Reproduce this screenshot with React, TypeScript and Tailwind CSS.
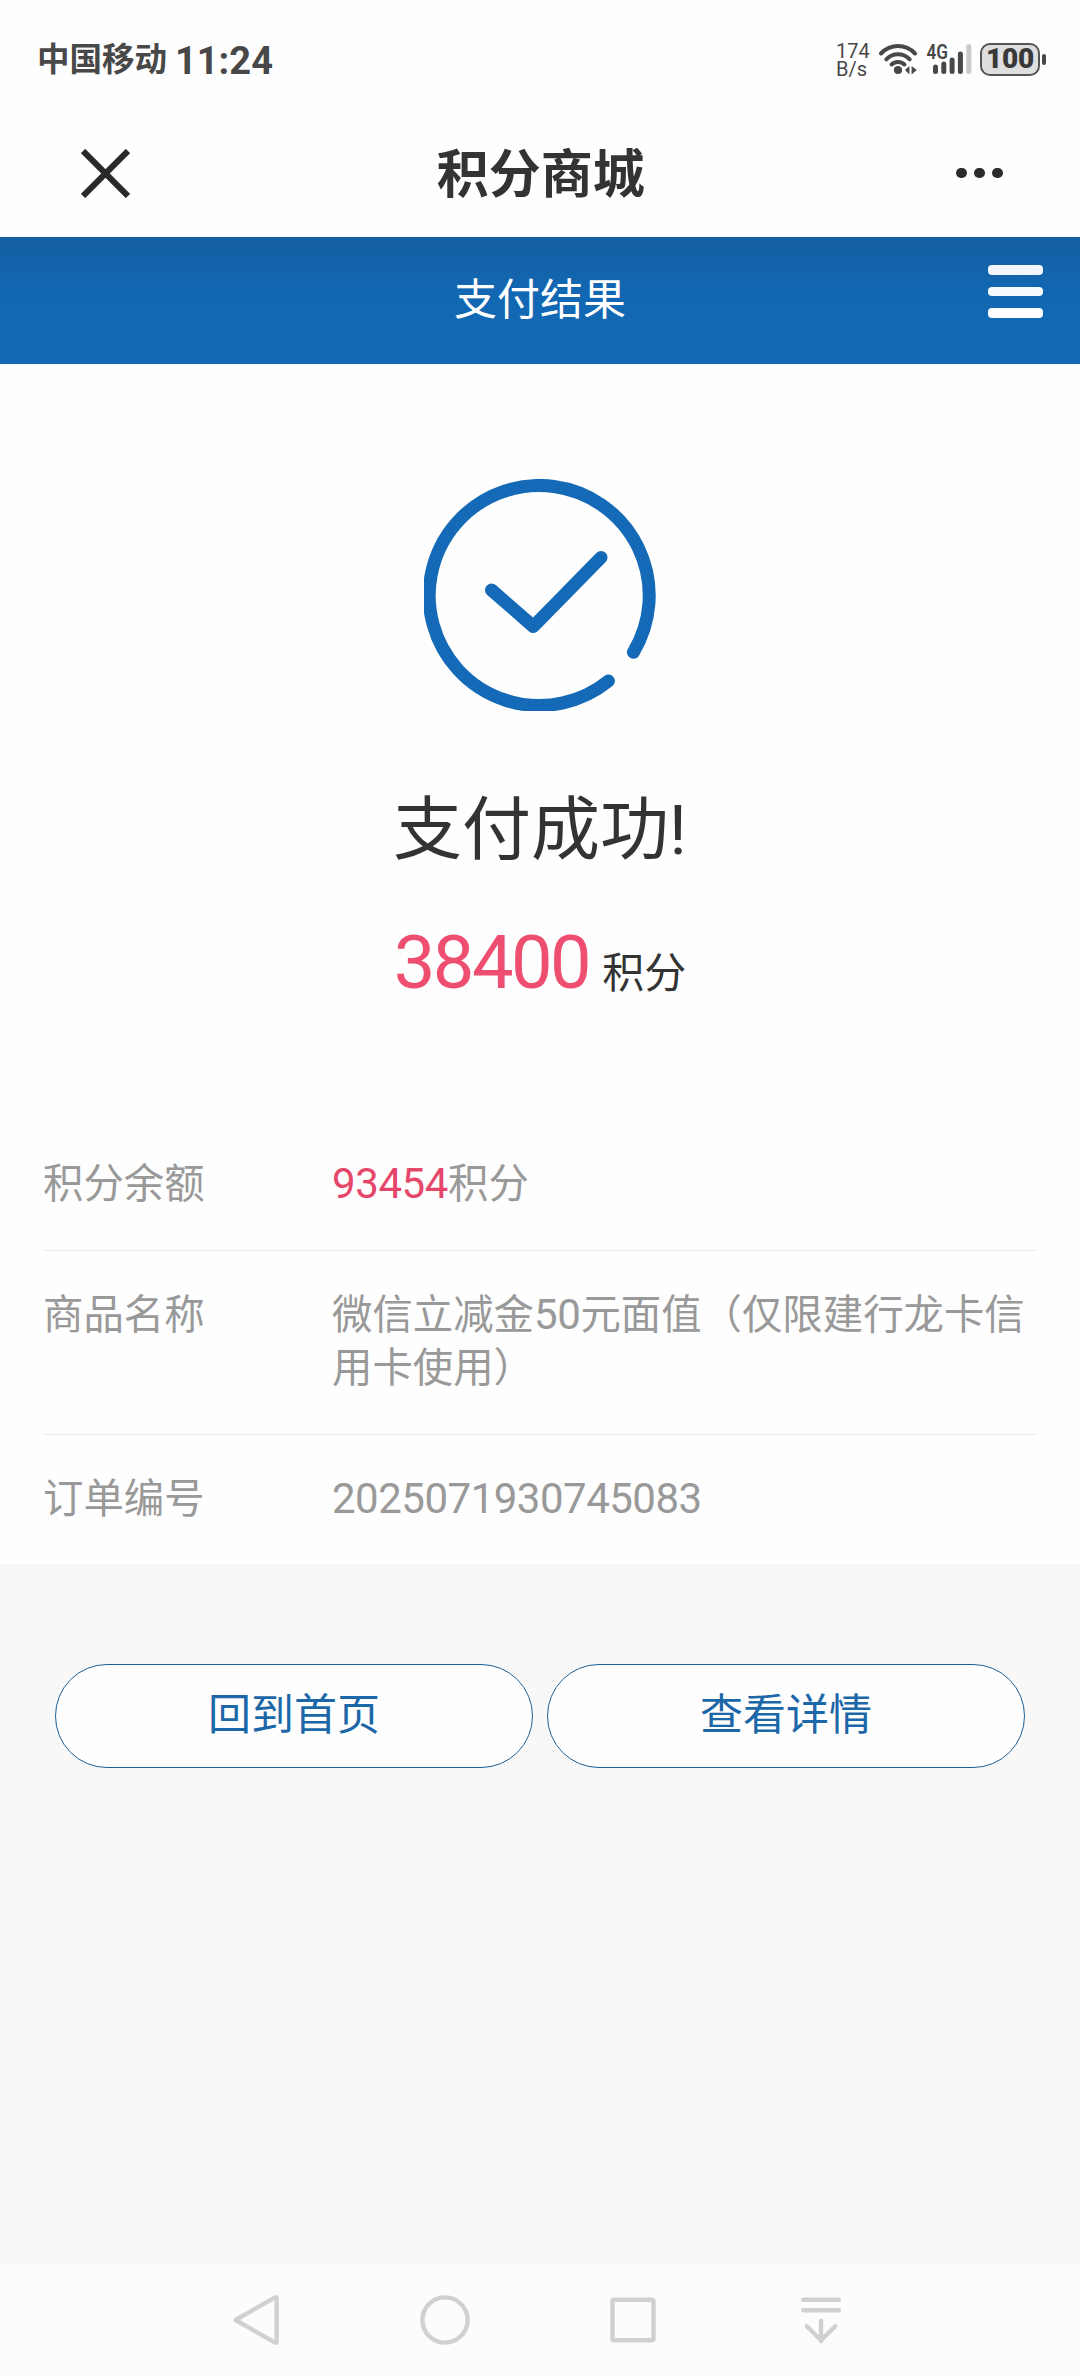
import type { ReactNode } from 'react';

const rows: { label: string; value: ReactNode }[] = [
  {
    label: '积分余额',
    value: (
      <>
        <span className="text-[42px] leading-none tracking-[-0.4px] text-[#e5476b]">93454</span>积分
      </>
    ),
  },
  {
    label: '商品名称',
    value: (
      <>
        微信立减金<span className="text-[42px] leading-none tracking-[-0.4px]">50</span>元面值（仅限建行龙卡信用卡使用）
      </>
    ),
  },
  {
    label: '订单编号',
    value: <span className="text-[42px] leading-none tracking-[-0.5px]">2025071930745083</span>,
  },
];

const actions = ['回到首页', '查看详情'];

function WifiIcon() {
  return (
    <svg width="40" height="34" viewBox="0 0 40 34" fill="none" stroke="#484848" strokeWidth="4" strokeLinecap="round">
      <path d="M3 11.5C12.5 1.6 27.5 1.6 37 11.5" />
      <path d="M8.3 17.3C14.8 10.6 25.2 10.6 31.7 17.3" />
      <path d="M13.5 22.5C17.2 19 22.8 19 26.5 22.5" />
      <circle cx="20" cy="28" r="4.1" fill="#484848" stroke="none" />
      <path d="M31.4 24v8.4l-4.4-4.4zM33.6 24v8.4l5.2-4.4z" fill="#484848" stroke="none" />
    </svg>
  );
}

function SignalIcon() {
  return (
    <svg width="46" height="34" viewBox="0 0 46 34" className="overflow-visible">
      <g fill="#484848">
        <rect x="7" y="22.5" width="5" height="9.5" rx="2.5" />
        <rect x="15.3" y="19.5" width="5" height="12.5" rx="2.5" />
        <rect x="23.6" y="15.5" width="5" height="16.5" rx="2.5" />
        <rect x="31.9" y="9.5" width="5" height="22.5" rx="2.5" />
      </g>
      <rect x="40.3" y="2" width="5" height="30" rx="2.5" fill="#cbcbcb" />
      <text x="0.5" y="16.5" fontSize="19.5" fontWeight="600" fill="#484848" textLength="21.5" lengthAdjust="spacingAndGlyphs">
        4G
      </text>
    </svg>
  );
}

function StatusBar() {
  return (
    <div className="flex h-[118px] items-center justify-between pr-[34px] pl-[37px] text-[#484848]">
      <div className="flex items-center gap-[8px] pt-[3px] font-bold">
        <span className="text-[32.5px]">中国移动</span>
        <span className="text-[38px] leading-[54px]">11:24</span>
      </div>
      <div className="flex items-center">
        <div className="mr-[9px] w-[33px] pt-[2px] text-[20px] leading-[18px]">
          <div>174</div>
          <div>B/s</div>
        </div>
        <WifiIcon />
        <div className="ml-[8px]">
          <SignalIcon />
        </div>
        <div className="ml-[8px] flex h-[33px] w-[60px] items-center justify-center rounded-[10px] border-2 border-[#555] bg-[#dedede] text-[28px] font-black tracking-[-0.2px] text-[#383838]">
          100
        </div>
        <div className="ml-[2px] h-[11px] w-[4px] rounded-full bg-[#484848]" />
      </div>
    </div>
  );
}

function TitleBar() {
  return (
    <div className="flex h-[119px] items-center justify-between pr-[77px] pb-[9px] pl-[81px]">
      <svg width="49" height="49" viewBox="0 0 48 48" stroke="#292929" strokeWidth="6">
        <path d="M2 2l44 44M46 2L2 46" />
      </svg>
      <h1 className="pt-[5px] pr-[5px] text-[52px] leading-none font-bold text-[#333]">积分商城</h1>
      <div className="flex gap-[7.5px]">
        <span className="size-[10.5px] rounded-full bg-[#2b2b2b]" />
        <span className="size-[10.5px] rounded-full bg-[#2b2b2b]" />
        <span className="size-[10.5px] rounded-full bg-[#2b2b2b]" />
      </div>
    </div>
  );
}

function PageHeader() {
  return (
    <header className="flex h-[126.5px] items-start justify-between bg-linear-to-b from-[#155fa3] via-[#1267b3] via-45% to-[#156ab6] px-[37px]">
      <div className="w-[55px]" />
      <h2 className="pt-[40px] text-[43px] leading-[46px] text-white">支付结果</h2>
      <div className="mt-[28px] flex w-[55px] flex-col gap-[12px]">
        <span className="h-[9.7px] rounded-[4px] bg-[#f3f7fb]" />
        <span className="h-[9.7px] rounded-[4px] bg-[#f6fafd]" />
        <span className="h-[9.7px] rounded-[4px] bg-white" />
      </div>
    </header>
  );
}

function SuccessIcon() {
  return (
    <svg width="232" height="232" viewBox="0 0 232 232" fill="none" stroke="#156ab7" strokeWidth="13" strokeLinecap="round">
      <path d="M209.4 173.3A110 110 0 1 0 184.4 202" />
      <path d="M67.5 111L109.3 147.5L177 78.5" strokeLinejoin="round" />
    </svg>
  );
}

function NavBar() {
  return (
    <nav className="flex h-[112px] items-center justify-center gap-[138px] bg-[#fcfcfc] pr-[2px]">
      <svg width="50" height="54" viewBox="0 0 50 54" fill="none" stroke="#d0d0d0" strokeWidth="4.4" strokeLinejoin="round">
        <path d="M3.6 27L43 4.4Q44.6 3.6 44.6 5.4V48.6Q44.6 50.4 43 49.6Z" />
      </svg>
      <svg width="50" height="54" viewBox="0 0 50 54" fill="none" stroke="#d0d0d0" strokeWidth="4.4">
        <circle cx="25" cy="27" r="22.6" />
      </svg>
      <svg width="50" height="54" viewBox="0 0 50 54" fill="none" stroke="#d0d0d0" strokeWidth="4.4">
        <rect x="4.5" y="6.7" width="41" height="40.6" rx="1.6" />
      </svg>
      <svg width="50" height="54" viewBox="0 0 50 54" fill="none" stroke="#d0d0d0" strokeWidth="4.4" strokeLinecap="round" strokeLinejoin="round">
        <path d="M7.2 6.7h35.6M7.2 17.2h35.6M25 28v20M10.8 33.3L25 47.2L39.2 33.3" />
      </svg>
    </nav>
  );
}

export default function App() {
  return (
    <div className="flex h-[2376px] w-[1080px] flex-col bg-[#f7f8f7] font-['Roboto','Noto_Sans_CJK_SC',sans-serif]">
      <div className="bg-[#fefefe]">
        <StatusBar />
        <TitleBar />
        <PageHeader />

        <section className="flex h-[755.5px] flex-col items-center pt-[115.5px]">
          <SuccessIcon />
          <h3 className="mt-[80px] text-[69px] leading-[80px] text-[#333]">支付成功!</h3>
          <p className="mt-[52px] flex items-baseline gap-[13px] leading-[80px]">
            <span className="text-[74px] tracking-[-2.5px] text-[#ee4e70]">38400</span>
            <span className="text-[42px] text-[#333]">积分</span>
          </p>
        </section>

        <dl className="px-[43px] text-[40.4px] leading-[52.5px] text-[#999]">
          {rows.map((row) => (
            <div key={row.label} className="flex border-b border-[#ececec] pt-[39.5px] pb-[38.5px] last:border-b-0 last:pb-[37.5px]">
              <dt className="w-[289px] shrink-0">{row.label}</dt>
              <dd className="flex-1">{row.value}</dd>
            </div>
          ))}
        </dl>
      </div>

      <div className="flex gap-[14px] px-[55px] pt-[100px]">
        {actions.map((action) => (
          <button
            key={action}
            className="h-[104px] flex-1 rounded-full border border-[#1f5f95] bg-[#fefefe] pb-[2px] text-[43px] text-[#1c67a8]"
          >
            {action}
          </button>
        ))}
      </div>

      <div className="mt-auto">
        <NavBar />
      </div>
    </div>
  );
}
